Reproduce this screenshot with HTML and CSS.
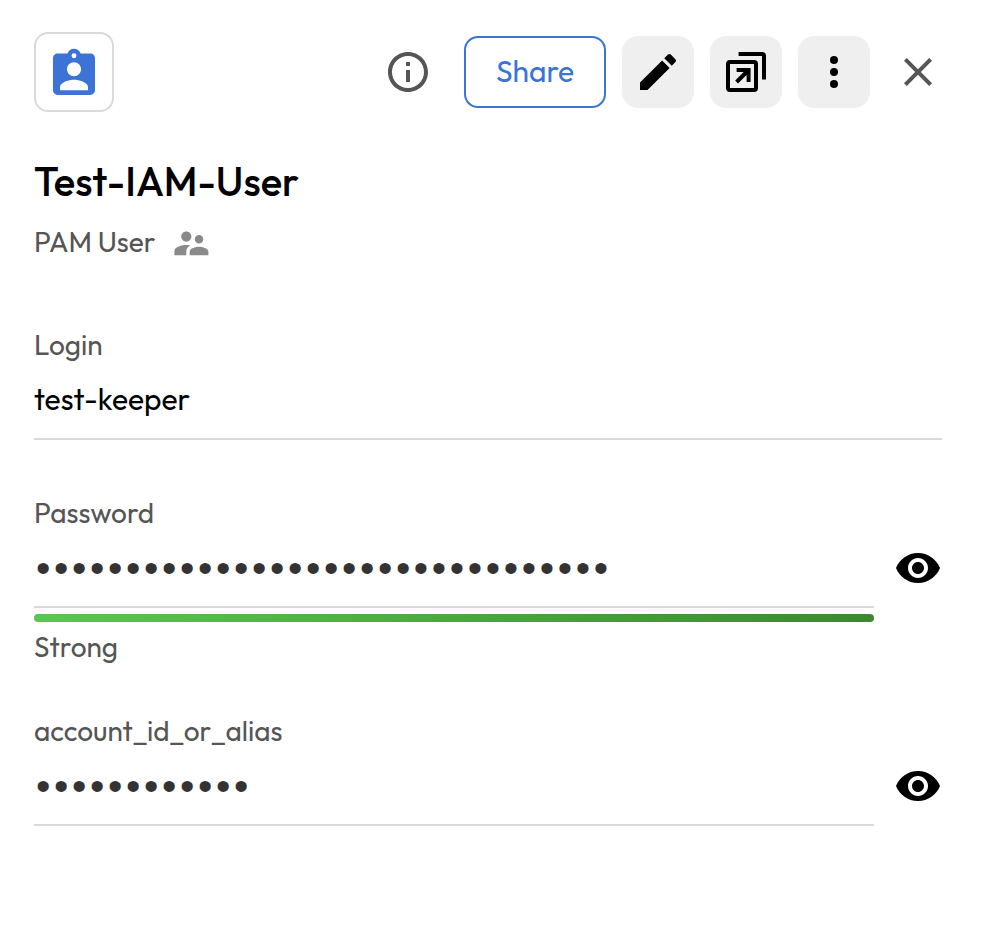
FILE: index.html
```html
<!DOCTYPE html>
<html lang="en">
<head>
<meta charset="utf-8">
<title>Test-IAM-User</title>
<link rel="stylesheet" href="styles.css">
</head>
<body>
<main class="record">
  <header class="toolbar">
    <div class="record-icon">
      <svg viewBox="0 0 24 24"><path fill-rule="evenodd" d="M19 3.200h-4.180C14.400 2.040 13.300 1.200 12 1.200s-2.400.84-2.820 2H5c-1.100 0-2 .9-2 2V19c0 1.100.9 2 2 2h14c1.100 0 2-.9 2-2V5.200c0-1.100-.9-2-2-2zM12 3.100a1.050 1.050 0 1 1 0 2.100 1.050 1.050 0 0 1 0-2.100zM12 7c1.660 0 3 1.340 3 3s-1.340 3-3 3-3-1.340-3-3 1.340-3 3-3zm6 12H6v-1.400c0-2 4-3.100 6-3.100s6 1.100 6 3.100V19z"/></svg>
    </div>
    <div class="actions">
      <svg class="info" viewBox="0 0 24 24"><path d="M11 7h2v2h-2zm0 4h2v6h-2zm1-9C6.480 2 2 6.480 2 12s4.480 10 10 10 10-4.480 10-10S17.520 2 12 2zm0 18c-4.410 0-8-3.590-8-8s3.590-8 8-8 8 3.590 8 8-3.590 8-8 8z"/></svg>
      <button class="share">Share</button>
      <button class="tile"><svg viewBox="0 0 24 24"><path d="M3 17.250V21h3.750L17.810 9.940l-3.750-3.750L3 17.250zM20.710 7.040a1 1 0 0 0 0-1.410l-2.340-2.340a1 1 0 0 0-1.410 0l-1.830 1.830 3.750 3.750 1.830-1.830z"/></svg></button>
      <button class="tile"><svg viewBox="0 0 24 24" class="outline"><rect x="3" y="7" width="14" height="14" rx="1"/><path d="M8.300 3H20a1 1 0 0 1 1 1v11.700M7.300 11h6v6M13.300 11l-6 6"/></svg></button>
      <button class="tile"><svg viewBox="0 0 24 24"><circle cx="12" cy="6" r="2"/><circle cx="12" cy="12" r="2"/><circle cx="12" cy="18" r="2"/></svg></button>
      <svg class="close" viewBox="0 0 24 24"><path d="M19 6.410L17.590 5 12 10.590 6.410 5 5 6.410 10.590 12 5 17.590 6.410 19 12 13.410 17.590 19 19 17.590 13.410 12z"/></svg>
    </div>
  </header>

  <h1 class="title">Test-IAM-User</h1>
  <div class="subtitle">
    <span class="type">PAM User</span>
    <svg class="people" viewBox="0 0 24 24"><path d="M16.500 12c1.380 0 2.490-1.120 2.490-2.500S17.880 7 16.500 7 14 8.120 14 9.500s1.120 2.500 2.500 2.500zM9 11c1.660 0 2.990-1.340 2.990-3S10.660 5 9 5 6 6.340 6 8s1.340 3 3 3zm7.500 3c-1.830 0-5.500.92-5.500 2.750V19h11v-2.250c0-1.830-3.670-2.750-5.500-2.750zM9 13c-2.330 0-7 1.170-7 3.500V19h7v-2.250c0-.85.33-2.340 2.370-3.470C10.500 13.100 9.660 13 9 13z"/></svg>
  </div>

  <section class="field">
    <div class="content">
      <div class="label">Login</div>
      <div class="value">test-keeper</div>
    </div>
  </section>

  <section class="field">
    <div class="content">
      <div class="label">Password</div>
      <div class="value dots">••••••••••••••••••••••••••••••••</div>
    </div>
    <svg class="eye" viewBox="0 0 24 24"><path d="M12 4.500C7 4.500 2.730 7.610 1 12c1.730 4.390 6 7.500 11 7.500s9.270-3.110 11-7.500c-1.730-4.390-6-7.500-11-7.500zM12 17c-2.760 0-5-2.240-5-5s2.240-5 5-5 5 2.240 5 5-2.240 5-5 5zm0-8c-1.660 0-3 1.340-3 3s1.340 3 3 3 3-1.340 3-3-1.340-3-3-3z"/></svg>
  </section>
  <div class="meter"></div>
  <div class="label strength">Strong</div>

  <section class="field account">
    <div class="content">
      <div class="label">account_id_or_alias</div>
      <div class="value dots">••••••••••••</div>
    </div>
    <svg class="eye" viewBox="0 0 24 24"><path d="M12 4.500C7 4.500 2.730 7.610 1 12c1.730 4.390 6 7.500 11 7.500s9.270-3.110 11-7.500c-1.730-4.390-6-7.500-11-7.500zM12 17c-2.760 0-5-2.240-5-5s2.240-5 5-5 5 2.240 5 5-2.240 5-5 5zm0-8c-1.660 0-3 1.340-3 3s1.340 3 3 3 3-1.340 3-3-1.340-3-3-3z"/></svg>
  </section>
</main>
</body>
</html>
```
FILE: styles.css
```css
* { box-sizing: border-box; }
body {
  margin: 0;
  background: #fff;
  color: #000;
  font-family: Outfit, Lato, sans-serif;
  font-size: 28px;
}
.record { padding: 32px 46px 0 34px; }
svg { display: block; width: 48px; height: 48px; flex: none; fill: currentColor; }

.toolbar { display: flex; justify-content: space-between; height: 80px; }
.record-icon {
  width: 80px;
  height: 80px;
  padding: 12px 10px 8px;
  border: 2px solid #dadada;
  border-radius: 14px;
  color: #3b74d6;
}
.record-icon svg { width: 56px; height: 56px; }
.actions { display: flex; align-items: center; gap: 16px; }
.info { margin-right: 16px; color: #555; }
.close { margin-left: 8px; color: #555; }
.share {
  width: 142px;
  height: 72px;
  padding: 0 0 2px;
  border: 2px solid #3b74d6;
  border-radius: 14px;
  background: #fff;
  color: #3b74d6;
  font: 400 30px/40px Outfit, Lato, sans-serif;
}
.tile {
  display: grid;
  place-items: center;
  width: 72px;
  height: 72px;
  padding: 0;
  border: 0;
  border-radius: 16px;
  background: #efefef;
  color: #000;
}
.outline { fill: none; stroke: currentColor; stroke-width: 2; }

.title { margin: 44px 0 0; font-size: 40px; line-height: 50px; font-weight: 500; white-space: nowrap; }
.subtitle { display: flex; align-items: center; height: 40px; margin-top: 15px; color: #555; }
.type { width: 137.4px; white-space: nowrap; }
.people { width: 40.8px; height: 40.8px; margin-top: 4px; color: #8a8a8a; }

.field { display: flex; gap: 20px; height: 112px; margin-top: 56px; }
.subtitle + .field { margin-top: 67px; }
.content { flex: 1; border-bottom: 2px solid #dadada; }
.label { height: 34px; line-height: 34px; color: #555; white-space: nowrap; }
.value { height: 34px; margin-top: 20px; font-size: 30px; line-height: 34px; white-space: nowrap; }
.dots {
  padding-left: 2px;
  color: #333;
  font-family: "Liberation Sans", sans-serif;
  font-size: 41px;
  line-height: 36px;
  letter-spacing: 3.64px;
}
.eye { margin-top: 48px; }
.meter {
  width: 840px;
  height: 8px;
  margin-top: 6px;
  border-radius: 4px;
  background: linear-gradient(90deg, #5dc453, #3e8731);
}
.strength { margin-top: 8px; }
.account { margin-top: 50px; }
```
